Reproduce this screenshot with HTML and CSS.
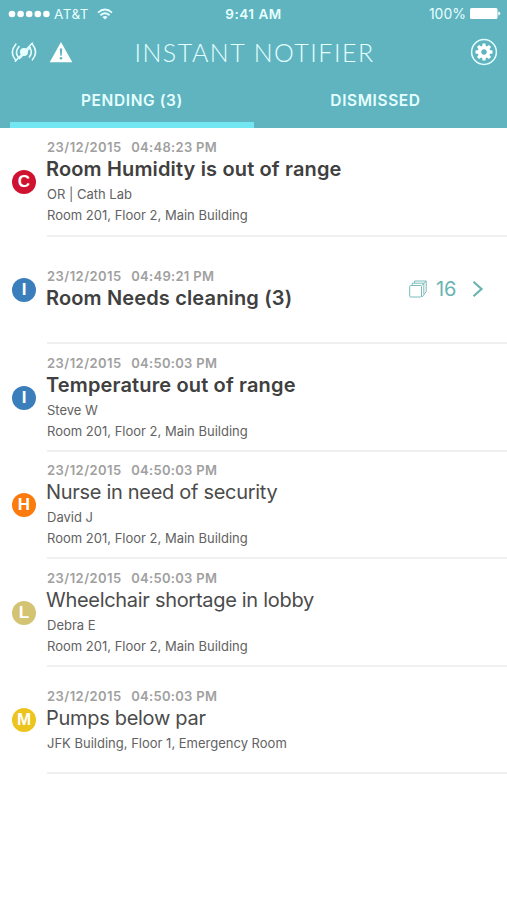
FILE: index.html
```html
<!DOCTYPE html>
<html lang="en">
<head>
<meta charset="utf-8">
<title>Instant Notifier</title>
<link rel="stylesheet" href="styles.css">
</head>
<body>
<header class="header">
  <div class="status">
    <div class="carrier">
      <svg width="42" height="8" viewBox="0 0 42 8" fill="#fff"><circle cx="4" cy="4" r="3.3"/><circle cx="12.6" cy="4" r="3.3"/><circle cx="21.2" cy="4" r="3.3"/><circle cx="29.8" cy="4" r="3.3"/><circle cx="38.4" cy="4" r="3.3"/></svg>
      <span class="network">AT&amp;T</span>
      <svg width="16" height="12" viewBox="0 0 16 12" fill="none" stroke="#e6ffff" stroke-width="1.8"><path d="M1 4.6Q8-1.7 15 4.6M3.4 7.3q4.6-4 9.2 0"/><path d="M5.4 8.9q2.6-2 5.2 0L8 11.6z" fill="#e6ffff" stroke="none"/></svg>
    </div>
    <span class="clock">9:41 AM</span>
    <div class="power">
      <span class="percent">100%</span>
      <svg width="31" height="12" viewBox="0 0 31 12" fill="#fff"><rect x="0" y="0" width="27.5" height="11" rx="1.5"/><path d="M28.3 3.5q2 .3 2 2t-2 2z"/></svg>
    </div>
  </div>
  <div class="bar">
    <div class="alerts">
      <svg width="26" height="22" viewBox="0 0 26 22" fill="none" stroke="#e6ffff" stroke-width="1.6" stroke-linecap="round"><path d="M4.8 3.2Q-1.8 11 4.2 18.6M8 5.5Q3.5 11 7 15.7M21.4 3.2q6.4 7.8 0 15.6M18.4 6q3.8 5 0 10M4.3 20.2 21.4 2"/><circle cx="13" cy="11" r="3.2" fill="#e6ffff"/><path d="m8.6 17.5 10.6-11"/></svg>
      <svg width="24" height="22" viewBox="0 0 24 22"><path d="M12 1 23.3 21.3H.7z" fill="#fff"/><path d="M10.8 7.6h2.4l-.5 7.2h-1.4z" fill="#5fb4c0"/><circle cx="12" cy="17.3" r="1.3" fill="#5fb4c0"/></svg>
    </div>
    <h1 class="heading">INSTANT NOTIFIER</h1>
    <svg class="gear" width="28" height="28" viewBox="-14 -14 28 28"><circle r="12.4" fill="none" stroke="#e6ffff" stroke-width="1.5"/><g fill="#fff"><path id="t" d="M-2-5-1.4-8.5h2.8L2-5z"/><use href="#t" transform="rotate(45)"/><use href="#t" transform="rotate(90)"/><use href="#t" transform="rotate(135)"/><use href="#t" transform="rotate(180)"/><use href="#t" transform="rotate(225)"/><use href="#t" transform="rotate(270)"/><use href="#t" transform="rotate(315)"/></g><circle r="4.5" fill="none" stroke="#fff" stroke-width="3.4"/></svg>
  </div>
  <nav class="tabs">
    <span class="tab active">PENDING (3)</span>
    <span class="tab">DISMISSED</span>
  </nav>
</header>
<main class="list">
  <section class="row">
    <span class="badge critical">C</span>
    <div class="body">
      <div class="text"><div class="date"><span>23/12/2015</span><span>04:48:23 PM</span></div>
      <h2 class="title unread">Room Humidity is out of range</h2>
      <p class="detail">OR | Cath Lab</p><p class="detail">Room 201, Floor 2, Main Building</p></div>
    </div>
  </section>
  <section class="row">
    <span class="badge info">I</span>
    <div class="body">
      <div class="text"><div class="date"><span>23/12/2015</span><span>04:49:21 PM</span></div>
      <h2 class="title unread">Room Needs cleaning (3)</h2></div>
      <div class="group">
        <svg width="18" height="18" viewBox="0 0 18 18" fill="#fff" stroke="#79bcb9" stroke-width="1"><path d="M5.5 1h11.7v10.5l-4 5.5M5.5 1v2M3.2 3.2h11.6v10.6M3.2 3.2v2M17.2 1l-4.5 4.5"/><rect x=".7" y="5.5" width="11.8" height="11.5" rx=".8"/></svg>
        <span class="count">16</span>
        <svg width="12" height="18" viewBox="0 0 12 18" fill="none" stroke="#69b4b3" stroke-width="2.2"><path d="m1.5 1.8 8 7.2-8 7.2"/></svg>
      </div>
    </div>
  </section>
  <section class="row">
    <span class="badge info">I</span>
    <div class="body">
      <div class="text"><div class="date"><span>23/12/2015</span><span>04:50:03 PM</span></div>
      <h2 class="title unread">Temperature out of range</h2>
      <p class="detail">Steve W</p><p class="detail">Room 201, Floor 2, Main Building</p></div>
    </div>
  </section>
  <section class="row">
    <span class="badge high">H</span>
    <div class="body">
      <div class="text"><div class="date"><span>23/12/2015</span><span>04:50:03 PM</span></div>
      <h2 class="title">Nurse in need of security</h2>
      <p class="detail">David J</p><p class="detail">Room 201, Floor 2, Main Building</p></div>
    </div>
  </section>
  <section class="row">
    <span class="badge low">L</span>
    <div class="body">
      <div class="text"><div class="date"><span>23/12/2015</span><span>04:50:03 PM</span></div>
      <h2 class="title">Wheelchair shortage in lobby</h2>
      <p class="detail">Debra E</p><p class="detail">Room 201, Floor 2, Main Building</p></div>
    </div>
  </section>
  <section class="row">
    <span class="badge medium">M</span>
    <div class="body">
      <div class="text"><div class="date"><span>23/12/2015</span><span>04:50:03 PM</span></div>
      <h2 class="title">Pumps below par</h2>
      <p class="detail">JFK Building, Floor 1, Emergency Room</p></div>
    </div>
  </section>
</main>
</body>
</html>
```

FILE: styles.css
```css
* { box-sizing: border-box; }
body { margin: 0; background: #fff; font-family: Inter, "Liberation Sans", sans-serif; color: #444; }
h1, h2, p { margin: 0; font-weight: 400; }
svg { display: block; flex: none; }
span, h1, h2, p { white-space: nowrap; }

.header { height: 127.5px; background: #5fb4c0; color: #e6ffff; }
.status { height: 27px; display: grid; grid-template-columns: 1fr auto 1fr; align-items: center; padding: 0 6px 0 8px; font-size: 13px; }
.carrier { display: flex; align-items: center; }
.network { margin: 0 8px 0 4px; font-size: 13.5px; letter-spacing: .5px; }
.clock { font-weight: 600; font-size: 13.5px; letter-spacing: .5px; margin-right: 2px; }
.power { display: flex; align-items: center; justify-content: flex-end; gap: 4px; font-size: 14px; }
.bar { height: 50px; display: grid; grid-template-columns: 1fr auto 1fr; align-items: center; padding: 0 9px 0 11px; }
.alerts { display: flex; gap: 12px; }
.heading { font: 300 25px/50px Lato, sans-serif; letter-spacing: 1.5px; }
.gear { justify-self: end; }
.tabs { height: 50.5px; display: flex; padding: 0 10px; }
.tab { flex: 1; text-align: center; font-size: 15.5px; font-weight: 600; line-height: 48px; letter-spacing: .6px; }
.active { flex: 0 0 244px; border-bottom: 6px solid #72e6f1; }

.row { height: 107.5px; display: flex; align-items: stretch; padding-left: 12px; }
.row:first-child { height: 109px; }
.badge { align-self: center; flex: none; width: 24px; height: 24px; border-radius: 50%; color: #fff; font: 700 17px/24px "Liberation Sans", sans-serif; text-align: center; }
.critical { background: #cf1231; }
.info { background: #3b7ebc; }
.high { background: #fb7b0f; }
.low { background: #d3c373; }
.medium { background: #edc31d; }
.body { flex: 1; margin-left: 11px; display: flex; align-items: center; border-bottom: 2px solid #f0f0f0; padding-top: 4px; }
.date { display: flex; gap: 9.5px; font-size: 13px; font-weight: 600; line-height: 15px; letter-spacing: .45px; color: #a0a0a0; }
.date span + span { letter-spacing: .3px; }
.title { margin-left: -1px; font-size: 20px; line-height: 29px; letter-spacing: -.3px; color: #4b4b4b; }
.unread { font-weight: 600; letter-spacing: .15px; color: #404040; }
.detail { font-size: 13px; line-height: 21px; color: #626262; }
.group { margin-left: auto; padding: 0 23.5px 4px 0; display: flex; align-items: center; }
.count { margin: 0 15px 0 9px; font-size: 20px; line-height: 24px; color: #69b4b3; }
```
